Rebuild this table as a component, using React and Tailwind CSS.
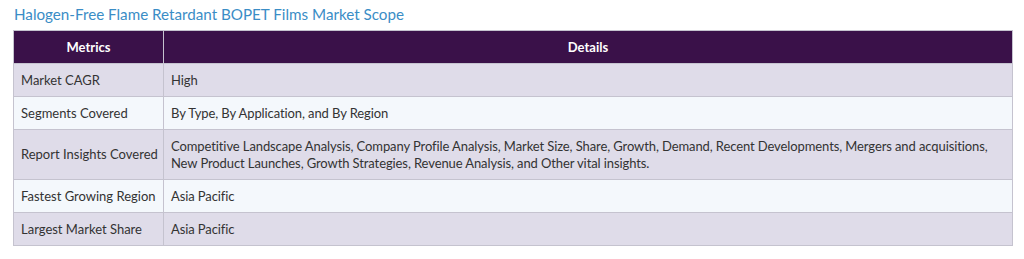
// Market scope table — title + two-column metrics/details grid

const rows = [
  { metric: 'Market CAGR', detail: 'High' },
  { metric: 'Segments Covered', detail: 'By Type, By Application, and By Region' },
  {
    metric: 'Report Insights Covered',
    detail:
      'Competitive Landscape Analysis, Company Profile Analysis, Market Size, Share, Growth, Demand, Recent Developments, Mergers and acquisitions, New Product Launches, Growth Strategies, Revenue Analysis, and Other vital insights.',
  },
  { metric: 'Fastest Growing Region', detail: 'Asia Pacific' },
  { metric: 'Largest Market Share', detail: 'Asia Pacific' },
]

export default function App() {
  return (
    <div
      className="w-[1024px] h-[259px] bg-white pl-[13px] pt-[4px] text-[#333]"
      style={{ fontFamily: 'Lato, "Open Sans", sans-serif' }}
    >
      <h2 className="text-[15.2px] leading-[20px] text-[#3a8dc6] font-normal pl-[1px] mb-[6px]">
        Halogen-Free Flame Retardant BOPET Films Market Scope
      </h2>
      <table className="w-[1000px] border-collapse text-[13px] leading-[17px]">
        <thead>
          <tr className="bg-[#3a1149] text-white">
            <th className="w-[150px] h-[33px] border border-[#c5c3cf] font-bold text-center">Metrics</th>
            <th className="h-[33px] border border-[#c5c3cf] font-bold text-center">Details</th>
          </tr>
        </thead>
        <tbody>
          {rows.map((r, i) => (
            <tr key={r.metric} className={i % 2 === 0 ? 'bg-[#dfdce9]' : 'bg-[#f4f8fc]'}>
              <td className="border border-[#c5c3cf] pl-[7px] pr-[4px] py-[7.5px] align-middle whitespace-nowrap">
                {r.metric}
              </td>
              <td className="border border-[#c5c3cf] px-[7px] py-[7.5px] align-middle tracking-[-0.1px]">
                {r.detail}
              </td>
            </tr>
          ))}
        </tbody>
      </table>
    </div>
  )
}
